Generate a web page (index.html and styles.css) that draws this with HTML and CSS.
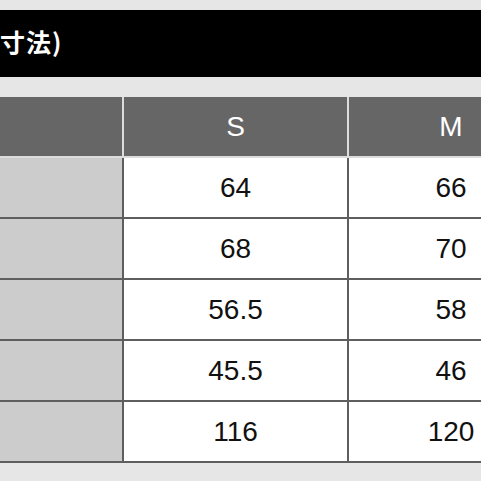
FILE: index.html
```html
<!DOCTYPE html>
<html lang="ja">
<head>
<meta charset="utf-8">
<link rel="stylesheet" href="styles.css">
</head>
<body>
<div class="page">
  <div class="titlebar"><span class="title">寸法)</span></div>
  <div class="table">
    <div class="row head">
      <div class="cell label"></div>
      <div class="cell">S</div>
      <div class="cell">M</div>
    </div>
    <div class="body">
      <div class="row">
        <div class="cell label"></div>
        <div class="cell">64</div>
        <div class="cell">66</div>
      </div>
      <div class="row">
        <div class="cell label"></div>
        <div class="cell">68</div>
        <div class="cell">70</div>
      </div>
      <div class="row">
        <div class="cell label"></div>
        <div class="cell">56.5</div>
        <div class="cell">58</div>
      </div>
      <div class="row">
        <div class="cell label"></div>
        <div class="cell">45.5</div>
        <div class="cell">46</div>
      </div>
      <div class="row">
        <div class="cell label"></div>
        <div class="cell">116</div>
        <div class="cell">120</div>
      </div>
    </div>
  </div>
</div>
</body>
</html>
```

FILE: styles.css
```css
html, body {
  margin: 0;
  padding: 0;
  background: #e6e6e6;
}
.page {
  width: 481px;
  height: 481px;
  overflow: hidden;
  padding-top: 10px;
  box-sizing: border-box;
  font-family: "Liberation Sans", "Noto Sans CJK JP", sans-serif;
}
.titlebar {
  height: 67px;
  background: #000;
  display: flex;
  align-items: center;
  overflow: hidden;
}
.title {
  color: #fff;
  font-family: "Noto Sans CJK JP", sans-serif;
  font-size: 25px;
  font-weight: 700;
  margin-left: 0;
  margin-top: -6px;
  letter-spacing: 1px;
}
.table {
  margin-top: 20px;
  width: 553px;
}
.row {
  display: grid;
  grid-template-columns: 122px 223px 204px;
  column-gap: 2px;
}
.head {
  background: #dcdcdc;
  padding-bottom: 2px;
}
.head .cell {
  background: #666;
  color: #fff;
  height: 59px;
}
.body {
  background: #5e5e5e;
  display: flex;
  flex-direction: column;
  gap: 2px;
  padding-bottom: 2px;
}
.body .row {
  background: #5e5e5e;
}
.cell {
  height: 59px;
  display: flex;
  align-items: center;
  justify-content: center;
  font-size: 28px;
  color: #111;
  background: #fff;
}
.body .label {
  background: #cccccc;
}
```
